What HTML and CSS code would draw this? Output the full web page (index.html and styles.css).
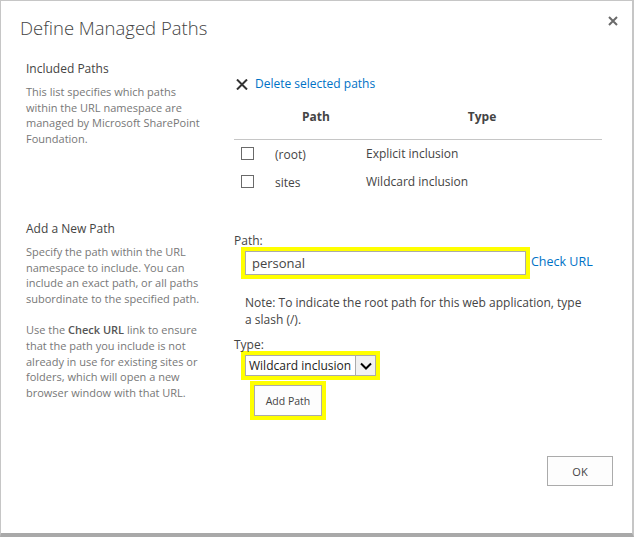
FILE: index.html
```html
<!DOCTYPE html>
<html lang="en">
  <head>
    <meta charset="UTF-8" />
    <meta name="viewport" content="width=device-width, initial-scale=1.0" />
    <title>Define Managed Paths</title>
    <link rel="stylesheet" href="styles.css">
  </head>
  <body>
    <div class="dialog">
      <div class="dialog-header">
        <h1>Define Managed Paths</h1>
        <span class="dialog-close">
          <svg width="10" height="10" viewBox="0 0 10 10">
            <path d="M1 1L9 9M9 1L1 9" stroke="#6a6a6a" stroke-width="2" />
          </svg>
        </span>
      </div>

      <div class="dialog-body">
        <div class="section">
          <div class="section-info">
            <h2>Included Paths</h2>
            <p>
              This list specifies which paths<br />
              within the URL namespace are<br />
              managed by Microsoft SharePoint<br />
              Foundation.
            </p>
          </div>
          <div class="section-content">
            <a class="delete-link" href="#">
              <svg width="12" height="11" viewBox="0 0 12 11">
                <path d="M1 0.5L11 10.5M11 0.5L1 10.5" stroke="#333" stroke-width="2" />
              </svg>
              Delete selected paths
            </a>
            <table class="paths">
              <thead>
                <tr>
                  <th class="col-check"></th>
                  <th class="col-path">Path</th>
                  <th class="col-type">Type</th>
                </tr>
              </thead>
              <tbody>
                <tr>
                  <td class="col-check"><span class="checkbox"></span></td>
                  <td class="col-path">(root)</td>
                  <td class="col-type">Explicit inclusion</td>
                </tr>
                <tr>
                  <td class="col-check"><span class="checkbox"></span></td>
                  <td class="col-path">sites</td>
                  <td class="col-type">Wildcard inclusion</td>
                </tr>
              </tbody>
            </table>
          </div>
        </div>

        <div class="section section-add">
          <div class="section-info">
            <h2>Add a New Path</h2>
            <p>
              Specify the path within the URL<br />
              namespace to include. You can<br />
              include an exact path, or all paths<br />
              subordinate to the specified path.
            </p>
            <p>
              Use the <b>Check URL</b> link to ensure<br />
              that the path you include is not<br />
              already in use for existing sites or<br />
              folders, which will open a new<br />
              browser window with that URL.
            </p>
          </div>
          <div class="section-content">
            <div class="field-label">Path:</div>
            <div class="field-row">
              <div class="highlight">
                <div class="text-input">personal</div>
              </div>
              <a class="check-link" href="#">Check URL</a>
            </div>
            <p class="note">
              Note: To indicate the root path for this web application, type<br />
              a slash (/).
            </p>
            <div class="field-label type-label">Type:</div>
            <div class="highlight select-wrap">
              <div class="select">
                <span class="select-value">Wildcard inclusion</span>
                <span class="select-arrow">
                  <svg width="12" height="8" viewBox="0 0 12 8">
                    <path d="M1 1.5L6 6.5L11 1.5" stroke="#000" stroke-width="2" fill="none" />
                  </svg>
                </span>
              </div>
            </div>
            <div class="highlight button-wrap">
              <button class="btn">Add Path</button>
            </div>
          </div>
        </div>
      </div>

      <div class="dialog-footer">
        <button class="btn btn-ok">OK</button>
      </div>
    </div>
  </body>
</html>
```

FILE: styles.css
```css
* {
  margin: 0;
  padding: 0;
  box-sizing: border-box;
}

body {
  background-color: #fff;
  font-family: "Open Sans", "Liberation Sans", sans-serif;
  color: #444;
  overflow: hidden;
}

.dialog {
  width: 634px;
  height: 537px;
  border: 1px solid #c6c6c6;
  border-right-width: 2px;
  border-bottom: 4px solid #a9a9a9;
  display: flex;
  flex-direction: column;
}

/* Header */

.dialog-header {
  display: flex;
  justify-content: space-between;
  align-items: flex-start;
  padding: 13px 14px 0 19px;
}

.dialog-header > h1 {
  font-weight: 300;
  font-size: 18.5px;
  line-height: 28px;
  color: #444;
}

.dialog-close {
  display: block;
  padding-top: 2px;
  line-height: 0;
}

/* Sections */

.section {
  display: grid;
  grid-template-columns: 208px 368px;
  padding-left: 25px;
}

.section-info > h2 {
  font-weight: 400;
  font-size: 12px;
  line-height: 16px;
  color: #444;
}

.section-info > p {
  font-size: 11px;
  line-height: 15.6px;
  color: #777;
  margin-top: 7px;
}

.section-info > p + p {
  margin-top: 16px;
}

.section-info b {
  color: #555;
  font-weight: 600;
}

.section:first-child {
  padding-top: 19px;
}

.section:first-child .section-content {
  padding-top: 15px;
}

.delete-link {
  display: flex;
  align-items: center;
  gap: 7px;
  color: #0072c6;
  text-decoration: none;
  font-size: 12px;
  line-height: 16px;
  padding-left: 2px;
}

/* Table */

.paths {
  width: 368px;
  border-collapse: collapse;
  margin-top: 8px;
  font-size: 12px;
  color: #444;
}

.paths th {
  font-weight: 700;
  font-size: 12px;
  height: 39px;
  padding-bottom: 6px;
  border-bottom: 1px solid #c6c6c6;
  text-align: center;
  vertical-align: middle;
}

.paths td {
  height: 28px;
  vertical-align: middle;
}

.paths .col-check {
  width: 36px;
  padding-left: 7px;
}

.paths .col-path {
  width: 92px;
}

.paths td.col-path {
  padding-left: 5px;
  padding-top: 3px;
}

.paths td.col-type {
  padding-left: 4px;
}

.checkbox {
  display: block;
  width: 13px;
  height: 13px;
  border: 1px solid #6a6a6a;
  background-color: #fff;
}

/* Add a new path */

.section-add {
  padding-top: 26px;
}

.section-add .section-content {
  padding-top: 12px;
}

.field-label {
  font-size: 12px;
  line-height: 16px;
  color: #444;
}

.field-row {
  display: flex;
  align-items: center;
  margin-top: -2px;
}

.highlight {
  border: 4px solid #ffff00;
  display: inline-block;
  margin-left: 7px;
}

.text-input {
  width: 281px;
  height: 24px;
  border: 1px solid #ababab;
  font-size: 13px;
  line-height: 22px;
  padding-left: 6px;
  color: #444;
}

.check-link {
  color: #0072c6;
  text-decoration: none;
  font-size: 12.5px;
  margin-left: 1px;
  margin-top: -3px;
}

.note {
  font-size: 12px;
  line-height: 17px;
  color: #444;
  padding-left: 11px;
  margin-top: 15px;
}

.type-label {
  margin-top: 9px;
}

.select-wrap {
  display: block;
  width: fit-content;
  margin-top: -2px;
}

.select {
  display: flex;
  align-items: stretch;
  width: 131px;
  height: 21px;
  border: 1px solid #ababab;
  font-size: 12px;
  color: #222;
}

.select-value {
  flex: 1;
  padding-left: 3px;
  line-height: 19px;
  white-space: nowrap;
  overflow: hidden;
}

.select-arrow {
  width: 20px;
  border-left: 1px solid #ababab;
  background-color: #f1f1f1;
  display: flex;
  align-items: center;
  justify-content: center;
}

.button-wrap {
  display: block;
  width: fit-content;
  margin-left: 16px;
  margin-top: 1px;
}

.btn {
  display: block;
  background-color: #fdfdfd;
  border: 1px solid #ababab;
  font-family: "Open Sans", "Liberation Sans", sans-serif;
  font-size: 10.5px;
  color: #444;
  width: 68px;
  height: 31px;
}

/* Footer */

.dialog-footer {
  margin-top: auto;
  display: flex;
  justify-content: flex-end;
  padding: 0 19px 47px 0;
}

.btn-ok {
  width: 66px;
  height: 30px;
  font-size: 11px;
}
```
